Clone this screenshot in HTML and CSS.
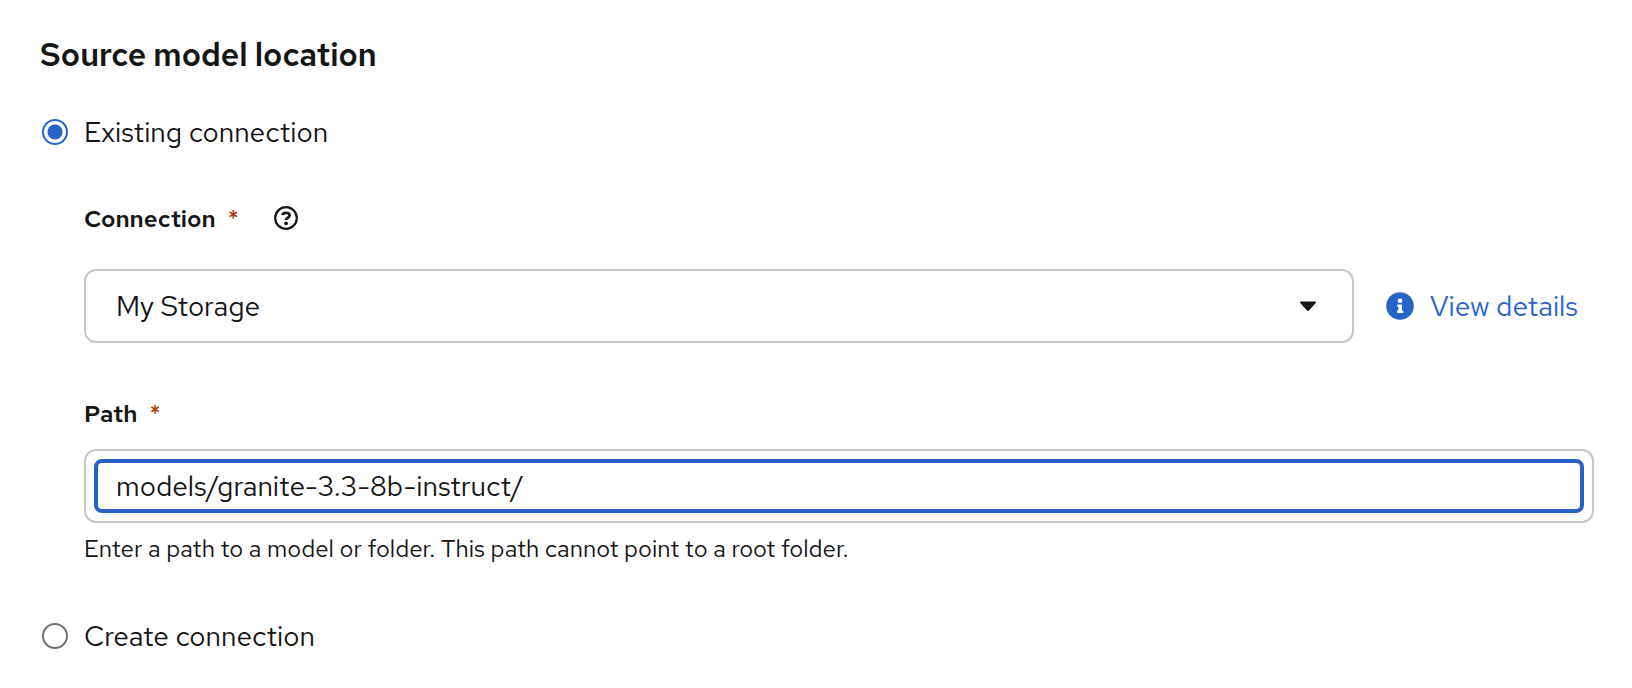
FILE: index.html
```html
<!DOCTYPE html>
<html lang="en">
<head>
<meta charset="utf-8">
<title>Source model location</title>
<link rel="stylesheet" href="styles.css">
</head>
<body>
<form class="form">
  <h1 class="form-title">Source model location</h1>

  <div class="radio">
    <input class="radio-input" type="radio" id="existing" name="location" checked>
    <label class="radio-label" for="existing">Existing connection</label>
  </div>

  <div class="radio-body">
    <div class="field field-connection">
      <div class="field-header">
        <label class="field-label" for="connection">Connection</label>
        <span class="required" aria-hidden="true">*</span>
        <button class="help" type="button" aria-label="More info">
          <svg class="help-icon" viewBox="0 0 24 24" aria-hidden="true">
            <circle cx="12" cy="12" r="10.8" fill="none" stroke="currentColor" stroke-width="2.2"/>
            <path d="M8.3 9.1C8.9 7.5 10.2 6.8 12 6.8c2.1 0 3.6 1 3.6 2.7 0 2.4-3.4 2.2-3.4 4.5" fill="none" stroke="currentColor" stroke-width="2.8"/>
            <circle cx="12.1" cy="17.3" r="1.9" fill="currentColor"/>
          </svg>
        </button>
      </div>
      <div class="connection-row">
        <div class="select">
          <select class="select-control" id="connection" required>
            <option>My Storage</option>
          </select>
          <svg class="select-caret" viewBox="0 0 16 10" aria-hidden="true">
            <path d="M1 .5h14c.9 0 1.3 1 .7 1.6L9 9.5c-.6.6-1.4.6-2 0L.3 2.1C-.3 1.5.1.5 1 .5z" fill="currentColor"/>
          </svg>
        </div>
        <button class="details" type="button">
          <svg class="details-icon" viewBox="0 0 28 28" aria-hidden="true">
            <circle cx="14" cy="14" r="13.8" fill="currentColor"/>
            <circle cx="14" cy="8.8" r="2.3" fill="#fff"/>
            <path d="M11.3 12.4h4.6v6.2h1.3v2.5h-6.1v-2.5h1.3v-3.7h-1.1z" fill="#fff"/>
          </svg>
          View details
        </button>
      </div>
    </div>

    <div class="field field-path">
      <div class="field-header">
        <label class="field-label" for="path">Path</label>
        <span class="required" aria-hidden="true">*</span>
      </div>
      <div class="text-box">
        <input class="text-input" type="text" id="path" value="models/granite-3.3-8b-instruct/" aria-describedby="path-help" required>
      </div>
      <p class="helper" id="path-help">Enter a path to a model or folder. This path cannot point to a root folder.</p>
    </div>
  </div>

  <div class="radio">
    <input class="radio-input" type="radio" id="create" name="location">
    <label class="radio-label" for="create">Create connection</label>
  </div>
</form>
</body>
</html>
```
FILE: styles.css
```css
* {
  box-sizing: border-box;
}

body {
  margin: 0;
  background: #fff;
  color: #151515;
  font: 28px/42px "Red Hat Text", Lato, "Open Sans", sans-serif;
}

button,
input,
select {
  margin: 0;
  font: inherit;
  color: inherit;
}

.form {
  padding: 34px 38px 31px 40px;
}

.form-title {
  margin: 0 0 35px;
  font-size: 32px;
  line-height: 42px;
  font-weight: 600;
}

.radio {
  display: flex;
  align-items: center;
  gap: 16px;
  padding-left: 2px;
}

.radio-input {
  appearance: none;
  width: 26px;
  height: 26px;
  border: 2px solid #707070;
  border-radius: 50%;
  background: #fff;
}

.radio-input:checked {
  border-color: #2864c8;
  background: radial-gradient(circle, #2864c8 7px, #fff 8px);
}

.radio-body {
  padding: 48px 0 48px 44px;
}

.field-path {
  margin-top: 53px;
}

.field-header {
  display: flex;
  align-items: center;
  font-size: 24px;
  line-height: 36px;
}

.field-connection .field-header {
  margin-bottom: 32px;
}

.field-path .field-header {
  margin-bottom: 17px;
}

.field-label {
  font-weight: 600;
}

.required {
  margin-left: 12px;
  color: #b1380b;
  font-weight: 500;
}

.help {
  display: flex;
  margin-left: 35px;
  padding: 0 0 2px;
  border: 0;
  background: none;
}

.help-icon {
  width: 24px;
  height: 24px;
}

.connection-row {
  display: flex;
  align-items: center;
}

.select {
  display: grid;
  flex: 1;
  align-items: center;
}

.select-control {
  grid-area: 1 / 1;
  appearance: none;
  width: 100%;
  height: 74px;
  padding: 0 76px 0 30px;
  border: 2px solid #c7c7c7;
  border-radius: 12px;
  background: #fff;
}

.select-caret {
  grid-area: 1 / 1;
  justify-self: end;
  width: 16px;
  height: 10px;
  margin-right: 38px;
  pointer-events: none;
}

.details {
  display: flex;
  align-items: center;
  gap: 16px;
  padding: 0 16px 0 32px;
  border: 0;
  background: none;
  color: #2864c8;
}

.details-icon {
  width: 28px;
  height: 28px;
}

.text-box {
  padding: 8px;
  border: 2px solid #c7c7c7;
  border-radius: 12px;
}

.text-input {
  display: block;
  width: 100%;
  height: 54px;
  padding: 0 18px;
  border: 4px solid #2860c8;
  border-radius: 8px;
  outline: 0;
  background: #fff;
}

.helper {
  margin: 8px 0 0;
  font-size: 24px;
  line-height: 36px;
}
```
